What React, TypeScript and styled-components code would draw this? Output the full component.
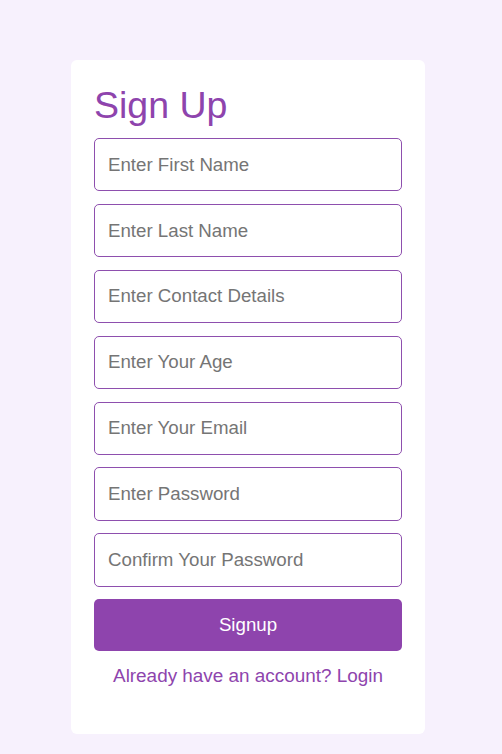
import React, { useState } from 'react';
import styled, { createGlobalStyle } from 'styled-components';

const GlobalStyle = createGlobalStyle`
  html, body {
    margin: 0;
    padding: 0;
    background: #f7f1fd;
    font-family: "Liberation Sans", Arial, sans-serif;
  }
`;

const Page = styled.div`
  display: flex;
  justify-content: center;
  padding: 60px 6px 0 0;
  min-height: 754px;
  box-sizing: border-box;
`;

const Card = styled.form`
  width: 354px;
  box-sizing: border-box;
  background: #ffffff;
  border-radius: 6px;
  padding: 22px 23px 47px;
  display: flex;
  flex-direction: column;
  align-self: flex-start;
`;

const Title = styled.h2`
  margin: 0 0 10px;
  font-size: 37.5px;
  font-weight: 400;
  line-height: 46px;
  color: #8e44ad;
`;

const Fields = styled.div`
  display: flex;
  flex-direction: column;
  gap: 12.6px;
`;

const Input = styled.input`
  height: 53.3px;
  box-sizing: border-box;
  padding: 0 13px;
  border: 1px solid #8e4fae;
  border-radius: 5px;
  font-family: inherit;
  font-size: 18.7px;
  color: #333;
  outline: none;

  &::placeholder {
    color: #757575;
  }
`;

const SubmitButton = styled.button`
  height: 52px;
  border: none;
  border-radius: 5px;
  background: #8e44ad;
  color: #ffffff;
  font-family: inherit;
  font-size: 18.7px;
  cursor: pointer;
`;

const Footer = styled.p`
  margin: 14px 0 0;
  text-align: center;
  font-size: 18.9px;
  color: #8e44ad;
`;

const LoginLink = styled.a`
  color: inherit;
  text-decoration: none;
`;

const placeholders = [
  'Enter First Name',
  'Enter Last Name',
  'Enter Contact Details',
  'Enter Your Age',
  'Enter Your Email',
  'Enter Password',
  'Confirm Your Password',
];

export default function App() {
  const [values, setValues] = useState<string[]>(placeholders.map(() => ''));

  const onChange = (i: number) => (e: React.ChangeEvent<HTMLInputElement>) => {
    const next = [...values];
    next[i] = e.target.value;
    setValues(next);
  };

  return (
    <>
      <GlobalStyle />
      <Page>
        <Card onSubmit={(e) => e.preventDefault()}>
          <Title>Sign Up</Title>
          <Fields>
            {placeholders.map((p, i) => (
              <Input
                key={p}
                type={p.includes('Password') ? 'password' : 'text'}
                placeholder={p}
                value={values[i]}
                onChange={onChange(i)}
              />
            ))}
            <SubmitButton type="submit">Signup</SubmitButton>
          </Fields>
          <Footer>
            Already have an account? <LoginLink href="#">Login</LoginLink>
          </Footer>
        </Card>
      </Page>
    </>
  );
}
